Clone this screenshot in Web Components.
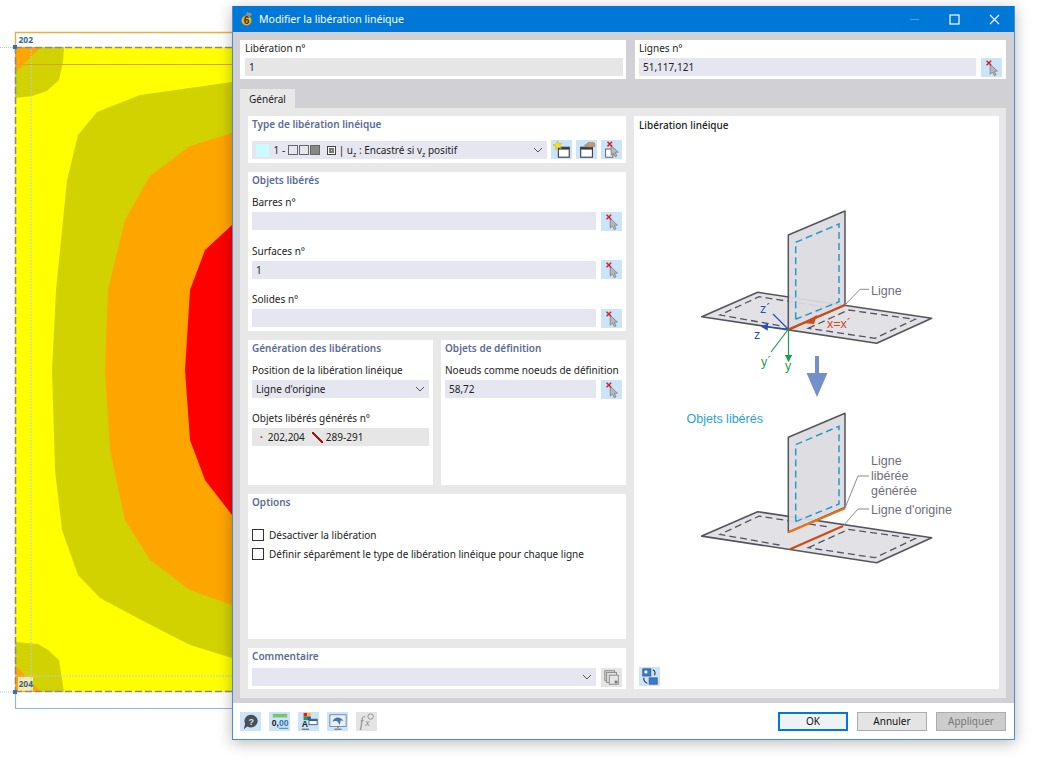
<!DOCTYPE html>
<html lang="fr">
<head>
<meta charset="utf-8">
<title>Modifier la libération linéique</title>
<style>
  html, body { margin: 0; height: 100%; background: #fff; font: 10px "Noto Sans", "Open Sans", sans-serif; color: #222; }
  body { width: 1040px; height: 780px; overflow: hidden; position: relative; }
  sub { font-size: 7px; line-height: 0; }
  .stack { display: flex; flex-direction: column; }
  .box { display: inline-block; width: 8px; height: 8px; border: 1px solid #666; margin-right: 1px; vertical-align: -1px; }
  .box.n { background: #888; }
  .box.c { margin: 0 3px 0 6px; width: 7px; height: 7px; border-color: #444; box-shadow: inset 0 0 0 1px #fff, inset 0 0 0 3px #777; }
  .swatch { display: inline-block; width: 13px; height: 13px; background: #ccfbff; margin-right: 2px; vertical-align: -3px; }
  .dot { color: #c8102e; margin: 0 5px 0 4px; font-weight: 700; }
  .lineglyph { display: inline-block; width: 11px; height: 11px; margin: 0 3px 0 7px; vertical-align: -2px; background: linear-gradient(135deg, transparent 45%, #a11 45%, #a11 58%, transparent 58%); transform: scaleX(-1); }
</style>
</head>
<body>

<template id="t-canvas">
  <style>
    :host { display: block; position: absolute; inset: 0; }
    svg { display: block; }
    text { font: 700 8.5px "Noto Sans", sans-serif; fill: #2f6a8f; }
  </style>
  <svg width="1040" height="780" viewBox="0 0 1040 780">
    <rect x="15" y="32" width="240" height="15" fill="#fff"/>
    <rect x="15" y="47" width="240" height="645" fill="#ffff00"/>
    <path d="M255 78 L232 82 L140 95 L97 112 L78 135 L67 180 L56 290 L52 370 L55 470 L62 530 L78 575 L100 598 L145 622 L190 645 L232 658 L255 660 Z" fill="#d2d200"/>
    <path d="M255 128 L232 133 L190 146 L150 176 L125 220 L108 290 L105 370 L110 450 L125 520 L150 560 L190 590 L232 605 L255 610 Z" fill="#ffa500"/>
    <path d="M255 205 L232 225 L205 250 L190 290 L185 370 L190 440 L205 480 L232 515 L255 535 Z" fill="#ff0000"/>
    <path d="M15 47 L64 47 L63 62 L59 80 L47 91 L32 96 L15 98 Z" fill="#d2d200"/>
    <path d="M15 47 L41 47 L15 73 Z" fill="#ffa500"/>
    <path d="M15 642 L38 644 L48 650 L59 660 L64 692 L15 692 Z" fill="#d2d200"/>
    <path d="M15 665 L41 692 L15 692 Z" fill="#ffa500"/>
    <rect x="18" y="677" width="15" height="14" fill="#ffe9a8"/>
    <path d="M15 64.5 H240" stroke="#e0a030" stroke-width="1.2"/>
    <path d="M31 47 V692 M15 676 H240" stroke="#b5cfe0" stroke-width="1" stroke-dasharray="2 1"/>
    <path d="M15.5 47 V32.5 H240" fill="none" stroke="#e8b040" stroke-width="1.4"/>
    <path d="M15.5 692 V708.5 H240" fill="none" stroke="#8fb8dc" stroke-width="1.2"/>
    <path d="M0 47.5 H15 M0 692 H15" stroke="#a8c8e8" stroke-dasharray="1 1"/>
    <path d="M15.5 47 V692 M15 47.5 H240 M15 691.5 H240" fill="none" stroke="#8a8a8a" stroke-width="1.6" stroke-dasharray="7 3"/>
    <rect x="13" y="45" width="4" height="4" fill="#3a6f9f"/>
    <rect x="13" y="690" width="4" height="4" fill="#3a6f9f"/>
    <text x="18.5" y="42.5">202</text>
    <text x="18.5" y="686.5">204</text>
  </svg>
</template>

<template id="t-dialog">
  <style>
    :host { display: flex; flex-direction: column; position: absolute; left: 232px; top: 6px; width: 783px; height: 734px; box-sizing: border-box;
      border: 1px solid #4a90d0; border-top: 0; background: #d0d0d5; box-shadow: 0 3px 14px rgba(0,0,0,.28); }
    header { height: 26px; flex: none; background: #0078d7; display: flex; align-items: center; color: #fff; padding-left: 7px; font-size: 10.5px; }
    header b { font-weight: 400; margin-left: 5px; flex: 1; }
    .ctl { width: 40px; height: 26px; display: flex; align-items: center; justify-content: center; }
    .ctl:last-child { margin-right: 0; }
    main { flex: 1; display: flex; flex-direction: column; padding: 8px 8px 5px 7px; min-height: 0; }
    footer { height: 36px; flex: none; background: #fff; display: flex; align-items: center; padding: 0 8px 0 7px; }
    .tools { display: flex; gap: 8px; flex: 1; }
    .actions { display: flex; gap: 9px; }
  </style>
  <header>
    <svg width="14" height="16" viewBox="0 0 14 16">
      <path d="M7 1 L12 2.5 L11 5 L6 4 Z" fill="#8a93a8"/>
      <circle cx="6.5" cy="9.5" r="5" fill="#f2b21b"/>
      <text x="6.5" y="13" font-family="Liberation Sans" font-size="10" font-weight="700" text-anchor="middle" fill="#3a3320">6</text>
    </svg>
    <b><slot name="title"></slot></b>
    <div class="ctl"><svg width="11" height="11"><path d="M1 5.5H10" stroke="#4ea0e4"/></svg></div>
    <div class="ctl"><svg width="11" height="11"><rect x="1" y="1" width="9" height="9" fill="none" stroke="#fff" stroke-width="1.2"/></svg></div>
    <div class="ctl"><svg width="11" height="11"><path d="M1 1L10 10M10 1L1 10" stroke="#fff" stroke-width="1.2"/></svg></div>
  </header>
  <main><slot></slot></main>
  <footer>
    <div class="tools"><slot name="tools"></slot></div>
    <div class="actions"><slot name="actions"></slot></div>
  </footer>
</template>

<template id="t-panel">
  <style>
    :host { display: flex; flex-direction: column; box-sizing: border-box; background: #fff; padding: 0 4px; min-width: 0; }
    h3 { margin: 0; height: 16px; line-height: 16px; font-size: 10px; font-weight: 600; color: #5b6b92; white-space: nowrap; }
    :host([plain]) h3 { display: none; }
    :host([plain]) { padding: 1px 4px 0 5px; }
    :host([dark]) h3 { color: #222; font-weight: 500; }
    .body { display: flex; flex-direction: column; gap: var(--gap, 13px); margin-top: var(--top, 7px); flex: 1; position: relative; }
    :host([plain]) .body { margin-top: 0; }
  </style>
  <h3></h3>
  <div class="body"><slot></slot></div>
</template>

<template id="t-field">
  <style>
    :host { display: block; }
    label { display: block; height: 14px; line-height: 14px; margin-bottom: 3px; white-space: nowrap; color: #222; }
    :host(:not([label])) label { display: none; }
    .row { display: flex; gap: 5px; align-items: center; height: 18px; }
    .val { flex: 1; height: 18px; line-height: 18px; box-sizing: border-box; padding-left: 4px; background: #e6e6f0; display: flex; align-items: center; white-space: nowrap; min-width: 0; }
    .txt { flex: 1; min-width: 0; }
    :host([readonly]) .val { background: #e6e6e6; }
    svg.chev { display: none; margin-right: 4px; flex: none; }
    :host([combo]) svg.chev { display: block; }
    rf-icon { display: none; }
    :host([pick]) rf-icon { display: block; }
  </style>
  <label></label>
  <div class="row">
    <div class="val"><span class="txt"><slot></slot></span>
      <svg class="chev" width="10" height="6" viewBox="0 0 10 6"><path d="M1 1L5 5L9 1" fill="none" stroke="#555" stroke-width="1"/></svg>
    </div>
    <rf-icon></rf-icon>
  </div>
</template>

<template id="t-check">
  <style>
    :host { display: flex; align-items: center; gap: 5px; height: 14px; }
    i { width: 10px; height: 10px; border: 1px solid #333; background: #fff; flex: none; }
  </style>
  <i></i><span><slot></slot></span>
</template>

<template id="t-button">
  <style>
    :host { display: flex; width: 70px; height: 19px; box-sizing: border-box; align-items: center; justify-content: center; background: #e4e4e4; border: 1px solid #adadad; color: #111; font-size: 10px; }
    :host([primary]) { border: 2px solid #0078d7; background: #eef1f5; }
    :host([disabled]) { background: #ccc; color: #777; }
  </style>
  <slot></slot>
</template>

<template id="t-sheet">
  <style>
    :host { display: flex; flex-direction: column; flex: 1; min-height: 0; margin-top: 10px; }
    .tabs { height: 19px; flex: none; display: flex; }
    .tab { width: 55px; background: #e8e8e8; display: flex; align-items: center; justify-content: center; color: #222; }
    .page { flex: 1; min-height: 0; background: #e8e8e8; padding: 8px 7px 9px 8px; display: grid; grid-template-columns: 378px 365px; column-gap: 8px; }
  </style>
  <div class="tabs"><div class="tab"><slot name="tab"></slot></div></div>
  <div class="page"><slot></slot></div>
</template>

<template id="t-diagram">
  <style>
    :host { display: block; background: #fff; position: relative; }
    h3 { margin: 0; position: absolute; left: 5px; top: 1px; line-height: 16px; font-size: 10px; font-weight: 500; color: #222; }
    svg.art { position: absolute; left: 0; top: 0; }
    svg.art text { font-family: "Liberation Sans", sans-serif; font-size: 12.5px; fill: #6e6e78; }
    rf-icon { position: absolute; left: 5px; top: 551px; }
  </style>
  <h3>Libération linéique</h3>
  <svg class="art" width="365" height="573" viewBox="634 116 365 573">
    <defs>
      <g id="plane">
        <path d="M701.7 316.7 L757.7 292.3 L931.7 318.3 L876.7 343.3 Z" fill="#e2e2e6" stroke="#54545f" stroke-width="1.6" stroke-linejoin="round"/>
        <path d="M826.7 307.3 L759 296.7 L720 315 L781.7 326 M808.3 328.3 L848.3 310 L915 319.3 L875 338.3 Z" fill="none" stroke="#54545f" stroke-width="1.3" stroke-dasharray="7 4"/>
      </g>
      <g id="plate">
        <path d="M788.3 235 L845 211 V305 L788.3 330 Z" fill="#dcdce0" fill-opacity=".93" stroke="#54545f" stroke-width="1.5" stroke-linejoin="round"/>
        <path d="M795.7 319.3 V242.3 L839 224 V301.7 L795.7 319.3" fill="none" stroke="#2a98cc" stroke-width="1.5" stroke-dasharray="7 4"/>
      </g>
      <marker id="hb" markerWidth="6" markerHeight="6" refX="5" refY="3" orient="auto"><path d="M0 0L6 3L0 6Z" fill="#2a50b4"/></marker>
      <marker id="hg" markerWidth="6" markerHeight="6" refX="5" refY="3" orient="auto"><path d="M0 0L6 3L0 6Z" fill="#18a050"/></marker>
    </defs>

    <use href="#plane"/>
    <use href="#plate"/>
    <path d="M788.3 329.5 L845 305" stroke="#cf4a14" stroke-width="2.4"/>
    <path d="M803 323 L817 315 L814 324 Z" fill="#cf4a14"/>
    <path d="M788 329 L773 314 M788 329 L762 326.5" stroke="#2a50b4" stroke-width="1.2" marker-end="url(#hb)"/>
    <path d="M788.5 329 L771 352 M788.5 329 V361" stroke="#18a050" stroke-width="1.2" marker-end="url(#hg)"/>
    <text x="760" y="313" style="fill:#2a50b4">z´</text>
    <text x="754" y="339" style="fill:#2a50b4">z</text>
    <text x="761" y="366" style="fill:#18a050">y´</text>
    <text x="785" y="370" style="fill:#18a050">y</text>
    <text x="827" y="328" style="fill:#cf4a14">x=x´</text>
    <path d="M845 305 L860 289.3 H869" fill="none" stroke="#8a8a92"/>
    <text x="871" y="295">Ligne</text>

    <path d="M815 356 H819 V373 H827.5 L817 397 L806.5 373 H815 Z" fill="#7390c8"/>

    <text x="686.5" y="423" style="fill:#2a9fdc;font-size:12.5px">Objets libérés</text>

    <use href="#plane" y="219.4"/>
    <use href="#plate" y="202.3"/>
    <path d="M788.3 532.3 L845 508.3" stroke="#f07010" stroke-width="2.2"/>
    <path d="M790 549.3 L843 526" stroke="#cf4a14" stroke-width="2.2"/>
    <path d="M845 508 L858 476 H869 M843 526 L858 509 H869" fill="none" stroke="#8a8a92"/>
    <text x="871" y="465">Ligne</text>
    <text x="871" y="480">libérée</text>
    <text x="871" y="495">générée</text>
    <text x="871" y="514">Ligne d'origine</text>
  </svg>
  <rf-icon name="swap"></rf-icon>
</template>

<script>
const ICONS = {
  pick: '<path d="M9 7 L9 18 L11.5 15.5 L13.5 19.5 L15.5 18.5 L13.5 14.7 L17 14.5 Z" fill="#b8b8bc" stroke="#77777c" stroke-width=".8"/><path d="M5 3L10 8M10 3L5 8" stroke="#d8202c" stroke-width="1.7"/>',
  create: '<rect x="7" y="8" width="12" height="11" fill="#fff" stroke="#3a3a40" stroke-width="1.2"/><rect x="7" y="8" width="12" height="2.6" fill="#3a3a40"/><path d="M6 1 L7.3 4.3 L11 3.5 L8.5 6.3 L10.5 9.5 L6.6 8.3 L3.8 11 L4.2 7.2 L1 5.4 L4.7 4.5 Z" fill="#f4e41c" stroke="#b9a80e" stroke-width=".5"/>',
  edit: '<rect x="4" y="8" width="13" height="11" fill="#fff" stroke="#3a3a40" stroke-width="1.2"/><rect x="4" y="8" width="13" height="2.6" fill="#3a3a40"/><path d="M8 6 L13 2.5 L19 3 L20 7 L15 8 L11 7.5 Z" fill="#c09a78" stroke="#8a6a50" stroke-width=".5"/>',
  remove: '<rect x="4" y="10" width="8" height="9" fill="#fff" stroke="#55555a"/><path d="M10 6 L10 17 L12.5 14.5 L14.5 18.5 L16.5 17.5 L14.5 13.7 L18 13.5 Z" fill="#b8b8bc" stroke="#77777c" stroke-width=".8"/><path d="M6 2L11 7M11 2L6 7" stroke="#d8202c" stroke-width="1.7"/>',
  copy: '<rect x="3" y="3" width="11" height="11" fill="#d0d0d0" stroke="#8a8a8a"/><rect x="5" y="5" width="11" height="11" fill="#dcdcdc" stroke="#8a8a8a"/><rect x="8" y="8" width="10" height="10" fill="#e4e4e4" stroke="#8a8a8a"/><rect x="14" y="14" width="3" height="3" fill="#777"/>',
  swap: '<rect x="3" y="2" width="9" height="8" fill="#3f78c8" stroke="#24508a" stroke-width=".7"/><rect x="5" y="4" width="3" height="3" fill="#fff"/><rect x="10" y="12" width="9" height="7" fill="#3f78c8" stroke="#24508a" stroke-width=".7"/><path d="M14 3 C17 4 17 7 16 9 M4 12 C4 15 5 17 8 18" fill="none" stroke="#333" stroke-width="1.2"/>',
  help: '<path d="M11 3 A7.5 7 0 1 1 7 16 L3 19 L4.5 13 A7.5 7 0 0 1 11 3 Z" fill="#4a4f55"/><text x="11.3" y="14" font-family="Liberation Sans" font-size="10" font-weight="700" text-anchor="middle" fill="#cfe6f8">?</text>',
  num: '<rect x="3" y="2" width="16" height="4" fill="#7cc46e"/><text x="2" y="16" font-family="Liberation Sans" font-size="9.5" font-weight="700" fill="#222">0,</text><text x="10" y="16" font-family="Liberation Sans" font-size="9.5" font-weight="700" fill="#2f6fc4">00</text><path d="M10 18H20" stroke="#2f6fc4"/>',
  colors: '<rect x="5" y="1" width="4" height="4" fill="#d8202c"/><rect x="9" y="1" width="4" height="4" fill="#f0c020"/><rect x="5" y="5" width="4" height="4" fill="#2a9a40"/><rect x="9" y="5" width="4" height="4" fill="#2f50c4"/><text x="3" y="17" font-family="Liberation Sans" font-size="9.5" font-weight="700" fill="#222">A</text><rect x="11" y="8" width="9" height="6" fill="#fff" stroke="#3a5a8a"/><rect x="11" y="8" width="9" height="2" fill="#3a5a8a"/><path d="M3 19H11" stroke="#444"/>',
  view: '<rect x="2" y="3" width="18" height="13" fill="#e8eef4" stroke="#6a8aa8"/><path d="M5 11 C6 5 14 4 17 10 L14 9 L13 14 L10 10 L7 10 Z" fill="#3f78a8"/><path d="M11 16V18M7 19H15" stroke="#555"/>',
  fx: '<text x="3" y="17" font-family="Liberation Serif" font-size="15" font-style="italic" fill="#8a8a8a">f</text><text x="9" y="16" font-family="Liberation Serif" font-size="11" font-style="italic" fill="#8a8a8a">x</text><circle cx="15" cy="5" r="3" fill="none" stroke="#8a8a8a"/>'
};

function mount(el, id) {
  const root = el.attachShadow({ mode: 'open' });
  root.appendChild(document.getElementById(id).content.cloneNode(true));
  return root;
}

customElements.define('rf-icon', class extends HTMLElement {
  static get observedAttributes() { return ['name']; }
  constructor() {
    super();
    this.attachShadow({ mode: 'open' });
  }
  connectedCallback() { this.draw(); }
  attributeChangedCallback() { this.draw(); }
  draw() {
    const name = this.getAttribute('name') || 'pick';
    const grey = name == 'copy' || name == 'fx';
    this.shadowRoot.innerHTML = `
      <style>
        :host { display: block; flex: none; width: 21px; height: 19px; }
        div { width: 100%; height: 100%; background: ${grey ? '#e4e4e4' : '#cce4f7'}; display: flex; align-items: center; justify-content: center; }
      </style>
      <div><svg width="20" height="19" viewBox="0 0 22 21">${ICONS[name]}</svg></div>`;
  }
});

customElements.define('rf-canvas', class extends HTMLElement {
  constructor() { super(); mount(this, 't-canvas'); }
});
customElements.define('rf-dialog', class extends HTMLElement {
  constructor() { super(); mount(this, 't-dialog'); }
});
customElements.define('rf-sheet', class extends HTMLElement {
  constructor() { super(); mount(this, 't-sheet'); }
});
customElements.define('rf-diagram', class extends HTMLElement {
  constructor() { super(); mount(this, 't-diagram'); }
});
customElements.define('rf-panel', class extends HTMLElement {
  constructor() { super(); mount(this, 't-panel'); }
  connectedCallback() {
    this.shadowRoot.querySelector('h3').textContent = this.getAttribute('heading') || '';
  }
});
customElements.define('rf-field', class extends HTMLElement {
  constructor() { super(); mount(this, 't-field'); }
  connectedCallback() {
    this.shadowRoot.querySelector('label').textContent = this.getAttribute('label') || '';
  }
});
customElements.define('rf-check', class extends HTMLElement {
  constructor() { super(); mount(this, 't-check'); }
});
customElements.define('rf-button', class extends HTMLElement {
  constructor() { super(); mount(this, 't-button'); }
});
</script>

<rf-canvas></rf-canvas>

<rf-dialog>
  <span slot="title">Modifier la libération linéique</span>

  <div style="display:grid;grid-template-columns:386px 371px;column-gap:9px;height:39px;flex:none">
    <rf-panel plain>
      <rf-field label="Libération n°" readonly style="margin-right:-1px">1</rf-field>
    </rf-panel>
    <rf-panel plain style="padding-left:4px">
      <rf-field label="Lignes n°" pick>51,117,121</rf-field>
    </rf-panel>
  </div>

  <rf-sheet>
    <span slot="tab">Général</span>

    <div class="stack" style="gap:9px;min-height:0">
      <rf-panel heading="Type de libération linéique" style="height:47px;--top:8px">
        <div style="display:flex;gap:4px;align-items:center">
          <rf-field combo style="flex:1;min-width:0"><span class="swatch"></span> 1 - <i class="box"></i><i class="box"></i><i class="box n"></i><i class="box c"></i>| u<sub>z</sub> : Encastré si v<sub>z</sub> positif</rf-field>
          <rf-icon name="create"></rf-icon>
          <rf-icon name="edit"></rf-icon>
          <rf-icon name="remove"></rf-icon>
        </div>
      </rf-panel>

      <rf-panel heading="Objets libérés" style="height:159px;--gap:13.5px">
        <rf-field label="Barres n°" pick></rf-field>
        <rf-field label="Surfaces n°" pick>1</rf-field>
        <rf-field label="Solides n°" pick></rf-field>
      </rf-panel>

      <div style="display:grid;grid-template-columns:185px 185px;column-gap:8px;height:145px;flex:none">
        <rf-panel heading="Génération des libérations">
          <rf-field label="Position de la libération linéique" combo>Ligne d'origine</rf-field>
          <rf-field label="Objets libérés générés n°" readonly><span class="dot">·</span>202,204<i class="lineglyph"></i>289-291</rf-field>
        </rf-panel>
        <rf-panel heading="Objets de définition">
          <rf-field label="Noeuds comme noeuds de définition" pick>58,72</rf-field>
        </rf-panel>
      </div>

      <rf-panel heading="Options" style="height:145px;--top:18px;--gap:5px">
        <rf-check>Désactiver la libération</rf-check>
        <rf-check>Définir séparément le type de libération linéique pour chaque ligne</rf-check>
      </rf-panel>

      <rf-panel heading="Commentaire" style="height:41px;--top:4px">
        <div style="display:flex;gap:5px">
          <rf-field combo style="flex:1;min-width:0"></rf-field>
          <rf-icon name="copy"></rf-icon>
        </div>
      </rf-panel>
    </div>

    <rf-diagram></rf-diagram>
  </rf-sheet>

  <rf-icon slot="tools" name="help"></rf-icon>
  <rf-icon slot="tools" name="num"></rf-icon>
  <rf-icon slot="tools" name="colors"></rf-icon>
  <rf-icon slot="tools" name="view"></rf-icon>
  <rf-icon slot="tools" name="fx"></rf-icon>

  <rf-button slot="actions" primary>OK</rf-button>
  <rf-button slot="actions">Annuler</rf-button>
  <rf-button slot="actions" disabled>Appliquer</rf-button>
</rf-dialog>

</body>
</html>
